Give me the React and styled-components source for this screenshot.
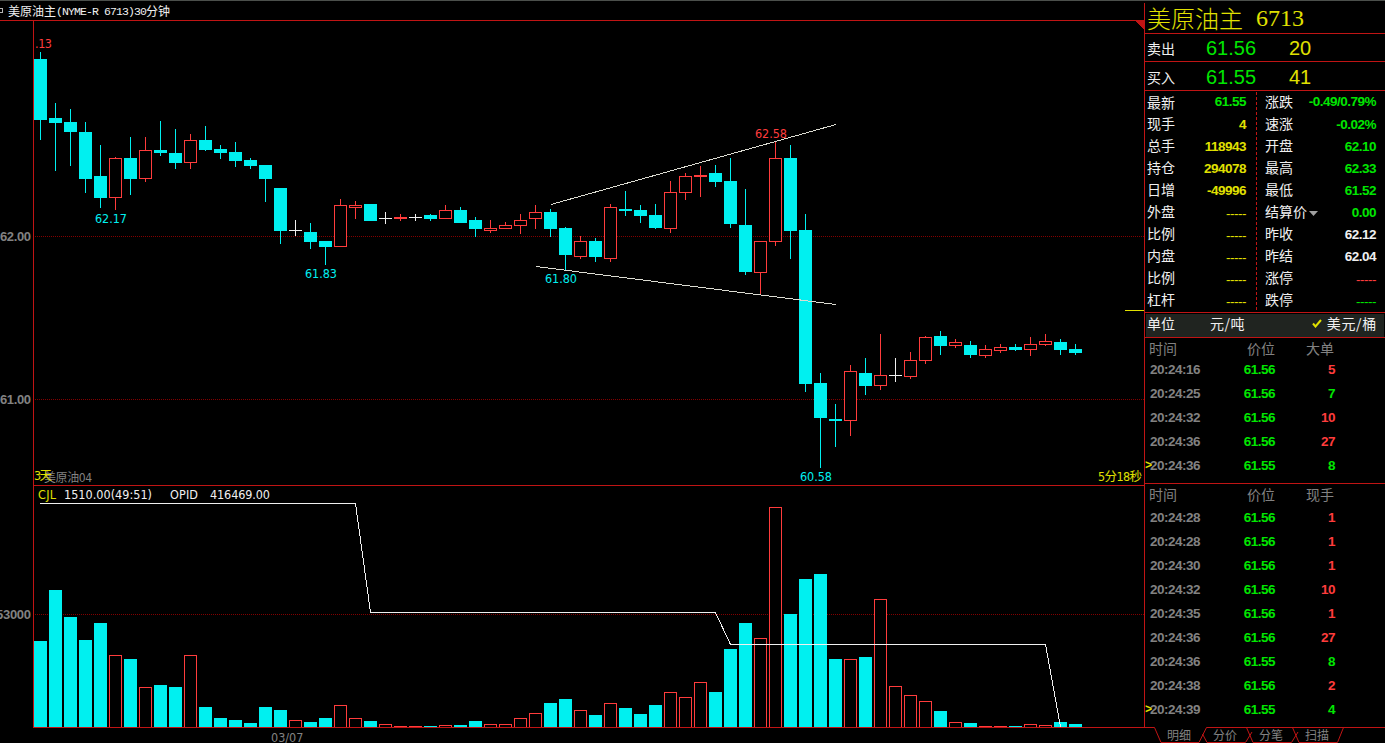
import styled, { createGlobalStyle, css } from "styled-components";

const GlobalStyle = createGlobalStyle`
  body {
    margin: 0;
    background: #000;
    overflow: hidden;
  }
`;

const colors = {
  line: "#c01414",
  grid: "#820000",
  up: "#ff3c3c",
  down: "#00f0f0",
  flat: "#f0f0f0",
  green: "#00e600",
  yellow: "#e1e100",
  white: "#f0f0f0",
  gray: "#828282",
  trend: "#dcdcd2",
};

const STEP = 15;
const FIRST = 34;
const BODY = 13;
const VOL_BASE = 727;

// [kind, high, bodyTop, bodyBottom, low, volumeKind, volumeTop]
const bars = [
  ["d", 52, 59, 120, 140, "d", 641],
  ["d", 103, 118, 123, 171, "d", 590],
  ["d", 109, 122, 132, 166, "d", 617],
  ["d", 122, 132, 179, 193, "d", 640],
  ["d", 145, 176, 198, 208, "d", 623],
  ["u", 157, 158, 198, 210, "u", 655],
  ["d", 137, 158, 179, 195, "d", 659],
  ["u", 137, 150, 179, 182, "u", 687],
  ["d", 121, 150, 153, 156, "d", 685],
  ["d", 129, 153, 163, 169, "d", 687],
  ["u", 134, 140, 163, 169, "u", 655],
  ["d", 126, 140, 150, 151, "d", 707],
  ["d", 145, 149, 153, 159, "d", 718],
  ["d", 142, 152, 161, 167, "d", 720],
  ["d", 158, 160, 166, 169, "d", 723],
  ["d", 165, 165, 179, 202, "d", 707],
  ["d", 188, 188, 231, 244, "d", 710],
  ["f", 220, 230, 231, 236, "u", 720],
  ["d", 223, 232, 242, 249, "d", 722],
  ["d", 241, 241, 247, 265, "d", 718],
  ["u", 199, 205, 247, 247, "u", 705],
  ["u", 201, 205, 208, 219, "u", 718],
  ["d", 204, 204, 221, 221, "d", 721],
  ["f", 212, 218, 219, 224, "u", 724],
  ["u", 214, 217, 219, 221, "u", 726],
  ["f", 214, 217, 218, 221, "u", 726],
  ["d", 214, 215, 219, 221, "d", 726],
  ["u", 205, 210, 219, 219, "u", 725],
  ["d", 207, 210, 223, 223, "d", 725],
  ["d", 217, 220, 229, 237, "d", 721],
  ["u", 220, 228, 231, 233, "u", 724],
  ["u", 222, 225, 229, 229, "u", 724],
  ["u", 214, 220, 226, 234, "u", 718],
  ["u", 205, 212, 219, 229, "u", 713],
  ["d", 209, 212, 229, 237, "d", 703],
  ["d", 227, 228, 255, 270, "d", 699],
  ["u", 236, 241, 257, 259, "u", 710],
  ["d", 238, 241, 257, 262, "d", 715],
  ["u", 204, 207, 259, 262, "u", 703],
  ["d", 191, 209, 211, 216, "d", 708],
  ["d", 205, 210, 216, 223, "d", 714],
  ["d", 204, 215, 228, 229, "d", 705],
  ["u", 181, 192, 229, 233, "u", 692],
  ["u", 173, 176, 193, 200, "u", 697],
  ["u", 166, 175, 177, 197, "u", 682],
  ["d", 165, 173, 182, 187, "d", 692],
  ["d", 158, 181, 224, 228, "d", 649],
  ["d", 189, 225, 272, 275, "d", 623],
  ["u", 241, 241, 273, 294, "u", 638],
  ["u", 141, 158, 242, 246, "u", 507],
  ["d", 145, 158, 231, 259, "d", 614],
  ["d", 214, 230, 384, 392, "d", 579],
  ["d", 373, 383, 418, 468, "d", 574],
  ["d", 404, 419, 421, 447, "d", 659],
  ["u", 365, 371, 421, 436, "u", 659],
  ["d", 358, 373, 386, 395, "d", 657],
  ["u", 334, 375, 386, 390, "u", 599],
  ["f", 358, 375, 376, 382, "u", 686],
  ["u", 352, 360, 377, 379, "u", 695],
  ["u", 336, 337, 361, 364, "u", 701],
  ["d", 331, 336, 346, 355, "d", 711],
  ["u", 339, 342, 346, 348, "u", 722],
  ["d", 341, 345, 355, 358, "d", 723],
  ["u", 345, 349, 356, 358, "u", 726],
  ["u", 344, 347, 351, 353, "u", 726],
  ["d", 344, 347, 350, 351, "d", 726],
  ["u", 337, 344, 350, 356, "u", 724],
  ["u", 334, 341, 345, 346, "u", 725],
  ["d", 339, 342, 350, 355, "d", 722],
  ["d", 344, 349, 353, 355, "d", 724],
];

const quotesLeft = [
  ["最新", "61.55", "green"],
  ["现手", "4", "yellow"],
  ["总手", "118943", "yellow"],
  ["持仓", "294078", "yellow"],
  ["日增", "-49996", "yellow"],
  ["外盘", "-----", "yellow"],
  ["比例", "-----", "yellow"],
  ["内盘", "-----", "yellow"],
  ["比例", "-----", "yellow"],
  ["杠杆", "-----", "yellow"],
];

const quotesRight = [
  ["涨跌", "-0.49/0.79%", "green"],
  ["速涨", "-0.02%", "green"],
  ["开盘", "62.10", "green"],
  ["最高", "62.33", "green"],
  ["最低", "61.52", "green"],
  ["结算价", "0.00", "green"],
  ["昨收", "62.12", "white"],
  ["昨结", "62.04", "white"],
  ["涨停", "-----", "up"],
  ["跌停", "-----", "green"],
];

const bigTrades = [
  ["20:24:16", "61.56", "5", "up"],
  ["20:24:25", "61.56", "7", "green"],
  ["20:24:32", "61.56", "10", "up"],
  ["20:24:36", "61.56", "27", "up"],
  ["20:24:36", "61.55", "8", "green"],
];

const trades = [
  ["20:24:28", "61.56", "1", "up"],
  ["20:24:28", "61.56", "1", "up"],
  ["20:24:30", "61.56", "1", "up"],
  ["20:24:32", "61.56", "10", "up"],
  ["20:24:35", "61.56", "1", "up"],
  ["20:24:36", "61.56", "27", "up"],
  ["20:24:36", "61.55", "8", "green"],
  ["20:24:38", "61.56", "2", "up"],
  ["20:24:39", "61.55", "4", "green"],
];

const tabs = ["明细", "分价", "分笔", "扫描"];

function Box({ kind, x, top, bottom }) {
  if (kind === "u" && bottom - top > 2) {
    return (
      <rect
        x={x + 0.5}
        y={top + 0.5}
        width={BODY - 1}
        height={bottom - top - 1}
        fill="#000"
        stroke={colors.up}
      />
    );
  }
  const fill = { u: colors.up, d: colors.down, f: colors.flat }[kind];
  return <rect x={x} y={top} width={BODY} height={bottom - top} fill={fill} />;
}

function Candle({ bar, x }) {
  const [kind, high, top, bottom, low] = bar;
  const fill = { u: colors.up, d: colors.down, f: colors.flat }[kind];
  return (
    <g>
      <rect x={x + 6} y={high} width="1" height={low - high} fill={fill} />
      <Box kind={kind} x={x} top={top} bottom={bottom} />
    </g>
  );
}

function PriceChart() {
  return (
    <Chart viewBox="0 21 1144 465" width="1144" height="465">
      <GridLine d="M35 236.5H1144M35 399.5H1144" />
      {bars.map((bar, i) => (
        <Candle key={i} bar={bar} x={FIRST + i * STEP} />
      ))}
      <path d="M551 204.5L836 124.5M536 266.5L836 304.5" stroke={colors.trend} />
      <path d="M33.5 21V485.5H1144" stroke={colors.line} fill="none" />
      <path d="M1135 21H1144V30Z" fill={colors.line} />
      <path d="M1125 310.5H1144" stroke={colors.yellow} />
      <Label x="35" y="48" textLength="17" fill={colors.up}>.13</Label>
      <Label x="95" y="223" textLength="32" fill={colors.down}>62.17</Label>
      <Label x="305" y="278" textLength="32" fill={colors.down}>61.83</Label>
      <Label x="545" y="283" textLength="32" fill={colors.down}>61.80</Label>
      <Label x="755" y="138" textLength="32" fill={colors.up}>62.58</Label>
      <Label x="800" y="481" textLength="32" fill={colors.down}>60.58</Label>
      <AxisLabel x="0" y="241" textLength="31">62.00</AxisLabel>
      <AxisLabel x="0" y="404" textLength="31">61.00</AxisLabel>
      <Label x="44" y="482" textLength="48" fill={colors.gray} $small>美原油04</Label>
      <Label x="34" y="480" textLength="18" fill={colors.yellow}>3天</Label>
      <Label x="1098" y="481" textLength="44" fill={colors.yellow}>5分18秒</Label>
    </Chart>
  );
}

function VolumeChart() {
  return (
    <Chart viewBox="0 486 1144 242" width="1144" height="242">
      <GridLine d="M35 614.5H1144" />
      {bars.map((bar, i) => (
        <Box
          key={i}
          kind={bar[5]}
          x={FIRST + i * STEP}
          top={bar[6]}
          bottom={VOL_BASE + (bar[5] === "u" ? 1 : 0)}
        />
      ))}
      <path
        d="M40 503.5H355.5L370.5 612.5H715.5L730.5 644.5H1045.5L1060.5 727"
        stroke={colors.white}
        fill="none"
      />
      <path d="M33.5 486V727.5H1144" stroke={colors.line} fill="none" />
      <Label x="38" y="499" textLength="18" fill={colors.yellow}>CJL</Label>
      <Label x="64" y="499" textLength="88" fill={colors.white}>1510.00(49:51)</Label>
      <Label x="170" y="499" textLength="28" fill={colors.white}>OPID</Label>
      <Label x="210" y="499" textLength="60" fill={colors.white}>416469.00</Label>
      <AxisLabel x="-4" y="619" textLength="35">53000</AxisLabel>
    </Chart>
  );
}

function QuoteColumn({ rows, right }) {
  return (
    <QuoteList $right={right}>
      {rows.map(([name, value, color], i) => (
        <QuoteRow key={i}>
          <Name>
            {name}
            {name === "结算价" && (
              <svg width="9" height="5" viewBox="0 0 9 5">
                <path d="M0 0H9L4.5 5Z" fill="#a0a0a0" />
              </svg>
            )}
          </Name>
          <Num $color={color} $empty={value === "-----"}>
            {value}
          </Num>
        </QuoteRow>
      ))}
    </QuoteList>
  );
}

function TradeList({ title, rows, divided }) {
  return (
    <Trades $divided={divided}>
      <TradeHead $height={divided ? 22 : 20}>
        <span>时间</span>
        <span>价位</span>
        <span>{title}</span>
      </TradeHead>
      {rows.map(([time, price, qty, color], i) => (
        <TradeRow key={i}>
          <Marker>{i === rows.length - 1 ? ">" : ""}</Marker>
          <Num $color="gray">{time}</Num>
          <Num $color="green">{price}</Num>
          <Num $color={color}>{qty}</Num>
        </TradeRow>
      ))}
    </Trades>
  );
}

export default function App() {
  return (
    <>
      <GlobalStyle />
      <Screen>
        <ChartPane>
          <TitleBar>
            <WindowMark />
            美原油主<Mono>(NYME-R 6713)30</Mono>分钟
          </TitleBar>
          <PriceChart />
          <VolumeChart />
          <DateAxis>03/07</DateAxis>
        </ChartPane>
        <Side>
          <Panel>
            <Symbol>
              美原油主<Code>6713</Code>
            </Symbol>
            <Offer $height={27}>
              <Name>卖出</Name>
              <Price>61.56</Price>
              <Amount>20</Amount>
            </Offer>
            <Offer $height={28} $low>
              <Name>买入</Name>
              <Price>61.55</Price>
              <Amount>41</Amount>
            </Offer>
            <Quotes>
              <QuoteColumn rows={quotesLeft} />
              <Divider width="1" height="219" viewBox="0 0 1 219">
                <path d="M.5 1V219" stroke={colors.line} strokeDasharray="3 2" />
              </Divider>
              <QuoteColumn rows={quotesRight} right />
            </Quotes>
            <UnitBar>
              <span>单位</span>
              <span>元/吨</span>
              <Chosen>
                <svg width="10" height="9" viewBox="0 0 10 9">
                  <path d="M1 4.5L3.5 7.5L9 1" stroke={colors.yellow} strokeWidth="2" fill="none" />
                </svg>
                美元/桶
              </Chosen>
            </UnitBar>
            <TradeList title="大单" rows={bigTrades} />
            <TradeList title="现手" rows={trades} divided />
          </Panel>
          <TabBar>
            <TabLines width="241" height="16" viewBox="0 0 241 16">
              <path d="M0 .5H10.5L17 15.5H55L62.5 .5H241" />
              <path d="M58.5 7L63 15.5H101.5L108 5M102.5 .5L109 15.5H147.5L154 5" />
              <path d="M148.5 .5L155 15.5H193.5L199.5 .5" />
            </TabLines>
            {tabs.map((tab) => (
              <Tab key={tab}>{tab}</Tab>
            ))}
          </TabBar>
        </Side>
      </Screen>
    </>
  );
}

const cjk = css`
  font-family: "Noto Sans CJK SC", sans-serif;
  font-weight: 400;
`;

const Screen = styled.div`
  display: grid;
  grid-template-columns: 1144px 241px;
  box-sizing: border-box;
  width: 1385px;
  height: 743px;
  border-top: 1px solid #4b4f4b;
  background: #000;
  overflow: hidden;
`;

const ChartPane = styled.div`
  display: flex;
  flex-direction: column;
`;

const TitleBar = styled.div`
  ${cjk}
  display: flex;
  align-items: center;
  height: 19px;
  border-bottom: 1px solid ${colors.line};
  color: ${colors.white};
  font-size: 12px;
  line-height: 19px;
  white-space: pre;
`;

const WindowMark = styled.i`
  width: 2px;
  height: 3px;
  margin-right: 5px;
  border: 1px solid #b4b4b4;
  border-left: 0;
`;

const Mono = styled.span`
  padding-top: 1px;
  font-family: "Liberation Mono", monospace;
  font-size: 11.5px;
  letter-spacing: -0.9px;
`;

const Chart = styled.svg`
  display: block;
  flex: none;

  & path,
  & rect {
    shape-rendering: crispEdges;
  }
`;

const GridLine = styled.path`
  stroke: ${colors.grid};
  stroke-dasharray: 1 1;
`;

const Label = styled.text`
  font-family: "DejaVu Sans Condensed", "DejaVu Sans", "Noto Sans CJK SC", sans-serif;
  font-stretch: condensed;
  font-size: ${({ $small }) => ($small ? "12px" : "12.5px")};
`;

const AxisLabel = styled.text`
  fill: ${colors.gray};
  font-family: "Liberation Sans", sans-serif;
  font-size: 13px;
  font-weight: bold;
`;

const DateAxis = styled.div`
  height: 13px;
  padding: 2px 0 0 271px;
  color: ${colors.gray};
  font: 12.5px/15px "DejaVu Sans Condensed", "DejaVu Sans", sans-serif;
  font-stretch: condensed;
`;

const Side = styled.div`
  display: flex;
  flex-direction: column;
  padding-top: 2px;
`;

const Panel = styled.div`
  box-sizing: border-box;
  height: 724px;
  border-left: 1px solid ${colors.line};
`;

const Symbol = styled.div`
  font-family: "Noto Sans CJK SC", sans-serif;
  font-weight: 300;
  display: flex;
  align-items: center;
  height: 30px;
  padding-left: 2px;
  border-bottom: 1px solid ${colors.line};
  color: ${colors.yellow};
  font-size: 24px;
  line-height: 30px;
`;

const Code = styled.span`
  margin-left: 13px;
  font-family: "Liberation Serif", serif;
`;

const Offer = styled.div`
  display: grid;
  grid-template-columns: 59px 83px 1fr;
  align-items: center;
  height: ${({ $height, $low }) => ($low ? $height - 2 : $height)}px;
  padding: ${({ $low }) => ($low ? "2px 0 0 2px" : "0 0 0 2px")};
  border-bottom: 1px solid ${colors.line};
`;

const Price = styled.span`
  color: ${colors.green};
  font: 20px/26px "Liberation Sans", sans-serif;
`;

const Amount = styled(Price)`
  color: ${colors.yellow};
`;

const Name = styled.span`
  ${cjk}
  display: flex;
  align-items: center;
  color: ${colors.white};
  font-size: 14px;
  line-height: 20px;

  & svg {
    margin: 4px 0 0 2px;
  }
`;

const Num = styled.span`
  color: ${({ $color }) => colors[$color]};
  font: bold 13.5px "Liberation Sans", sans-serif;
  font-weight: ${({ $empty }) => ($empty ? "normal" : "bold")};
  line-height: ${({ $empty }) => ($empty ? "26px" : "24px")};
  letter-spacing: -0.5px;
`;

const Quotes = styled.div`
  display: flex;
  height: 221px;
  border-bottom: 1px solid ${colors.line};
`;

const Divider = styled.svg`
  flex: none;
`;

const QuoteRow = styled.div`
  display: flex;
  align-items: flex-start;
  justify-content: space-between;
  height: 22px;

  &:first-child ${Num} {
    line-height: 22px;
  }
`;

const QuoteList = styled.div`
  width: ${({ $right }) => ($right ? "111px" : "99px")};
  padding: ${({ $right }) => ($right ? "0 8px" : "0 10px 0 2px")};

  ${({ $right }) =>
    !$right &&
    css`
      ${QuoteRow}:first-child ${Name} {
        line-height: 23px;
      }
    `}
`;

const UnitBar = styled.div`
  ${cjk}
  display: flex;
  height: 23px;
  margin: 1px 1px 0;
  padding: 0 7px 0 1px;
  background: #202420;
  color: ${colors.white};
  font-size: 14px;
  line-height: 19px;

  & > span:nth-child(2) {
    margin-left: 35px;
    letter-spacing: 0.5px;
  }
`;

const Chosen = styled.span`
  display: flex;
  align-items: center;
  gap: 5px;
  height: 19px;
  margin-left: auto;
  letter-spacing: 0.7px;
`;

const Trades = styled.div`
  height: ${({ $divided }) => ($divided ? "243px" : "145px")};
  border-top: 1px solid ${colors.line};
`;

const TradeHead = styled.div`
  ${cjk}
  display: flex;
  height: ${({ $height }) => $height}px;
  padding-left: 4px;
  color: ${colors.gray};
  font-size: 14px;
  line-height: 20px;

  & span:nth-child(2) {
    margin-left: 70px;
  }

  & span:nth-child(3) {
    margin-left: 31px;
  }
`;

const TradeRow = styled.div`
  display: grid;
  grid-template-columns: 5px 60px 65px 60px;
  height: 24px;

  ${Num}:nth-child(n + 3) {
    text-align: right;
  }
`;

const Marker = styled.span`
  color: ${colors.yellow};
  font: bold 12px/24px "Liberation Mono", monospace;
`;

const TabBar = styled.div`
  ${cjk}
  position: relative;
  display: flex;
  gap: 22px;
  height: 16px;
  padding-left: 23px;
  color: ${colors.gray};
  font-size: 12px;
  line-height: 16px;
`;

const TabLines = styled.svg`
  position: absolute;
  inset: 0;
  fill: none;
  stroke: ${colors.line};
`;

const Tab = styled.span`
  width: 24px;
`;
